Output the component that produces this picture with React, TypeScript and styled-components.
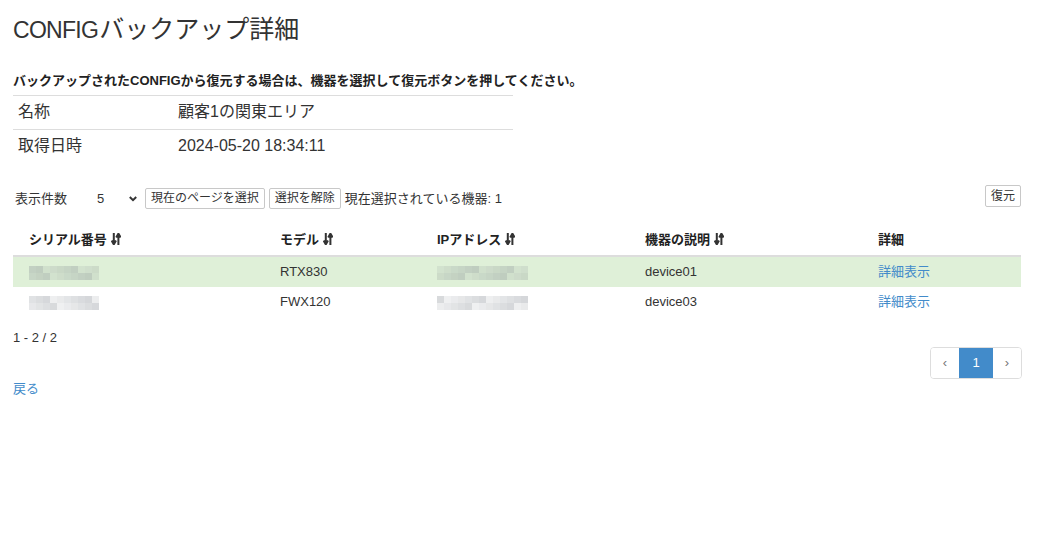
import React from 'react';
import styled, {createGlobalStyle} from 'styled-components';

const GlobalStyle = createGlobalStyle`
  html, body {
    margin: 0;
    padding: 0;
    background: #fff;
  }
  body {
    font-family: "Liberation Sans", Arial, "Noto Sans CJK JP", sans-serif;
    font-size: 13px;
    line-height: 20px;
    color: #333;
  }
`;

const Page = styled.div`
  padding: 14px 25px 0 13px;
`;

const Title = styled.h3`
  margin: 0;
  font-size: 25px;
  line-height: 30px;
  font-weight: 400;
  color: #333;
`;

const TitleLatin = styled.span`
  font-size: 23px;
  letter-spacing: -0.7px;
  margin-right: 1px;
`;

const Lead = styled.p`
  margin: 26px 0 4px;
  font-weight: 700;
  font-size: 13px;
  line-height: 20px;
  color: #222;
`;

const InfoTable = styled.table`
  width: 500px;
  border-collapse: collapse;
  font-size: 16px;
  line-height: 23px;

  td {
    padding: 4px 5px 6px;
    border-top: 1px solid #ddd;
  }
  td:first-child {
    width: 150px;
  }
`;

const Toolbar = styled.div`
  display: flex;
  align-items: center;
  gap: 4px;
  margin-top: 23px;
  height: 25px;
`;

const Label = styled.span`
  margin-left: 2px;
`;

const PageSize = styled.div`
  display: flex;
  align-items: center;
  justify-content: space-between;
  margin-left: 26px;
  width: 44px;
  padding-right: 4px;
  box-sizing: border-box;
`;

const SmallButton = styled.button`
  font-family: inherit;
  font-size: 12px;
  line-height: 17px;
  height: 21px;
  padding: 0 5px;
  color: #333;
  background: #fff;
  border: 1px solid #c8c8c8;
  border-radius: 2px;
  cursor: pointer;
`;

const RestoreButton = styled(SmallButton)`
  margin-left: auto;
  height: 22px;
  margin-top: -5px;
`;

const DataTable = styled.table`
  width: 1008px;
  margin-top: 14px;
  border-collapse: collapse;
  table-layout: fixed;

  th, td {
    padding: 5px;
    text-align: left;
    white-space: nowrap;
  }
  th {
    font-weight: 700;
    color: #222;
    border-bottom: 2px solid #ddd;
  }
`;

const Row = styled.tr<{$selected?: boolean}>`
  background: ${p => (p.$selected ? '#dff0d8' : 'transparent')};
  & + & td {
    border-top: 1px solid #ddd;
  }
`;

const Link = styled.a`
  color: #428bca;
  text-decoration: none;
`;

const Summary = styled.div`
  margin-top: 11px;
`;

const PagerRow = styled.div`
  display: flex;
  justify-content: flex-end;
  margin-top: -1px;
`;

const Pager = styled.ul`
  display: flex;
  margin: 0 -1px 0 0;
  padding: 0;
  list-style: none;
  border: 1px solid #ddd;
  border-radius: 4px;
  overflow: hidden;
`;

const PageItem = styled.li<{$active?: boolean}>`
  width: ${p => (p.$active ? '34px' : '28px')};
  height: 30px;
  display: flex;
  align-items: center;
  justify-content: center;
  font-size: 13px;
  color: ${p => (p.$active ? '#fff' : '#777')};
  background: ${p => (p.$active ? '#428bca' : '#fff')};
`;

const Mosaic = styled.span<{$cols: number}>`
  display: inline-grid;
  grid-template-columns: repeat(${p => p.$cols}, 7px);
  grid-auto-rows: 7px;
  vertical-align: middle;
`;

const Cell = styled.span<{$a: number}>`
  background: rgba(125, 132, 140, ${p => p.$a});
`;

const SortIcon = () => (
    <svg width="10" height="12" viewBox="0 0 10 12" style={{verticalAlign: '-1px', marginLeft: 4}}>
        <path d="M2.8 0v10M0.6 7.6L2.8 11.4 5 7.6" stroke="#333" strokeWidth="2" fill="none"/>
        <path d="M7.4 12V2M5.2 4.4L7.4 0.6 9.6 4.4" stroke="#333" strokeWidth="2" fill="none"/>
    </svg>
);

const Chevron = () => (
    <svg width="8" height="6" viewBox="0 0 8 6">
        <path d="M0.8 1l3.2 3.2L7.2 1" stroke="#333" strokeWidth="2" fill="none"/>
    </svg>
);

// pixelated placeholder for masked values
const Blur = ({seed, cols}: {seed: number; cols: number}) => {
    const cells = [...Array(cols * 2)].map((_, i) => {
        const v = ((i * 37 + seed * 13) % 17) / 17;
        return 0.12 + v * 0.22;
    });
    return (
        <Mosaic $cols={cols}>
            {cells.map((a, i) => <Cell key={i} $a={a}/>)}
        </Mosaic>
    );
};

const devices = [
    {model: 'RTX830', desc: 'device01', selected: true},
    {model: 'FWX120', desc: 'device03', selected: false},
];

const App = () => {
    return (
        <Page>
            <GlobalStyle/>
            <Title><TitleLatin>CONFIG</TitleLatin>バックアップ詳細</Title>
            <Lead>バックアップされたCONFIGから復元する場合は、機器を選択して復元ボタンを押してください。</Lead>
            <InfoTable>
                <tbody>
                <tr>
                    <td>名称</td>
                    <td>顧客1の関東エリア</td>
                </tr>
                <tr>
                    <td>取得日時</td>
                    <td>2024-05-20 18:34:11</td>
                </tr>
                </tbody>
            </InfoTable>

            <Toolbar>
                <Label>表示件数</Label>
                <PageSize>
                    <span>5</span>
                    <Chevron/>
                </PageSize>
                <SmallButton>現在のページを選択</SmallButton>
                <SmallButton>選択を解除</SmallButton>
                <span>現在選択されている機器: 1</span>
                <RestoreButton>復元</RestoreButton>
            </Toolbar>

            <DataTable>
                <colgroup>
                    <col style={{width: 11}}/>
                    <col style={{width: 251}}/>
                    <col style={{width: 157}}/>
                    <col style={{width: 208}}/>
                    <col style={{width: 233}}/>
                    <col/>
                </colgroup>
                <thead>
                <tr>
                    <th/>
                    <th>シリアル番号<SortIcon/></th>
                    <th>モデル<SortIcon/></th>
                    <th>IPアドレス<SortIcon/></th>
                    <th>機器の説明<SortIcon/></th>
                    <th>詳細</th>
                </tr>
                </thead>
                <tbody>
                {devices.map((d, i) => (
                    <Row key={d.desc} $selected={d.selected}>
                        <td/>
                        <td><Blur seed={i + 1} cols={10}/></td>
                        <td>{d.model}</td>
                        <td><Blur seed={i + 4} cols={13}/></td>
                        <td>{d.desc}</td>
                        <td><Link href="#">詳細表示</Link></td>
                    </Row>
                ))}
                </tbody>
            </DataTable>

            <Summary>1 - 2 / 2</Summary>
            <PagerRow>
                <Pager>
                    <PageItem>‹</PageItem>
                    <PageItem $active>1</PageItem>
                    <PageItem>›</PageItem>
                </Pager>
            </PagerRow>
            <Link href="#">戻る</Link>
        </Page>
    );
};

export default App;
